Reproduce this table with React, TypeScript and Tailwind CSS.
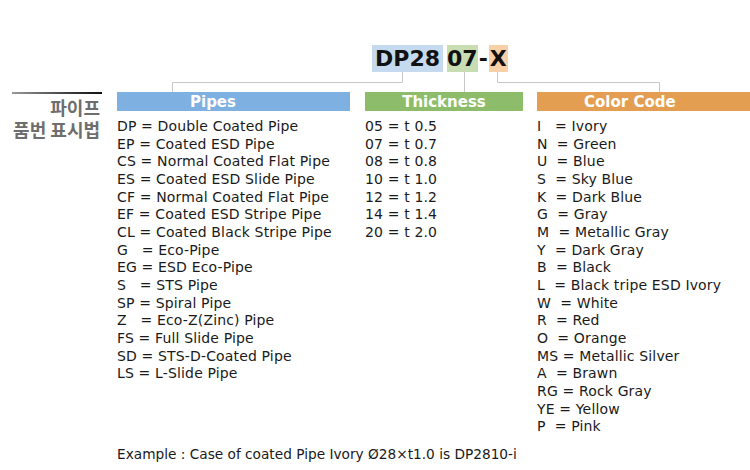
const pipes = [
  'DP = Double Coated Pipe',
  'EP = Coated ESD Pipe',
  'CS = Normal Coated Flat Pipe',
  'ES = Coated ESD Slide Pipe',
  'CF = Normal Coated Flat Pipe',
  'EF = Coated ESD Stripe Pipe',
  'CL = Coated Black Stripe Pipe',
  'G   = Eco-Pipe',
  'EG = ESD Eco-Pipe',
  'S   = STS Pipe',
  'SP = Spiral Pipe',
  'Z   = Eco-Z(Zinc) Pipe',
  'FS = Full Slide Pipe',
  'SD = STS-D-Coated Pipe',
  'LS = L-Slide Pipe',
];

const thickness = [
  '05 = t 0.5',
  '07 = t 0.7',
  '08 = t 0.8',
  '10 = t 1.0',
  '12 = t 1.2',
  '14 = t 1.4',
  '20 = t 2.0',
];

const colors = [
  'I   = Ivory',
  'N  = Green',
  'U  = Blue',
  'S  = Sky Blue',
  'K  = Dark Blue',
  'G  = Gray',
  'M  = Metallic Gray',
  'Y  = Dark Gray',
  'B  = Black',
  'L  = Black tripe ESD Ivory',
  'W  = White',
  'R  = Red',
  'O  = Orange',
  'MS = Metallic Silver',
  'A  = Brawn',
  'RG = Rock Gray',
  'YE = Yellow',
  'P  = Pink',
];

function Column({ title, items, bar, titleClass }: { title: string; items: string[]; bar: string; titleClass: string }) {
  return (
    <div className="flex flex-col">
      <div className={`h-[19px] flex items-center ${bar} ${titleClass}`}>
        <span className="text-white font-bold text-[15px] leading-none pt-[1px]">{title}</span>
      </div>
      <ul className="mt-[7px] text-[14px] tracking-[0.15px] leading-[17.65px] text-[#1a1a1a] whitespace-pre">
        {items.map((line) => (
          <li key={line}>{line}</li>
        ))}
      </ul>
    </div>
  );
}

export default function App() {
  return (
    <div className="w-[750px] h-[470px] bg-white overflow-hidden pt-[45px] font-['DejaVu_Sans',sans-serif]">
      {/* part number */}
      <div className="ml-[372px] flex items-center h-[27px] text-[22px] font-bold text-[#111] leading-none">
        <span className="bg-[#c6daef] h-[27px] px-[3px] flex items-center">DP28</span>
        <span className="bg-[#c8ddb2] h-[27px] ml-[4px] flex items-center">07</span>
        <span className="mx-[1px]">-</span>
        <span className="bg-[#f8d0a8] h-[27px] px-[1px] flex items-center">X</span>
      </div>

      {/* connectors */}
      <svg width="750" height="20" className="block">
        <g stroke="#c8c8c8" strokeWidth="1" fill="none">
          <polyline points="402.5,0 402.5,10.5 172.5,10.5 172.5,20" />
          <line x1="464.5" y1="0" x2="464.5" y2="20" />
          <polyline points="497.5,0 497.5,10.5 659.5,10.5 659.5,20" />
        </g>
      </svg>

      <div className="flex items-start">
        <div className="w-[117px] flex flex-col items-end">
          <div className="w-[90px] h-[2px] mr-[15px] bg-gradient-to-r from-[#9a9a9a] to-[#111]" />
          <div className="pr-[17px] mt-[3px] text-right text-[18px] font-bold text-[#6e6e6e] font-['Noto_Sans_CJK_KR',sans-serif]">
            <div className="leading-[21px]">파이프</div>
            <div className="leading-[21px] mt-[1px]">품번 표시법</div>
          </div>
        </div>
        <div className="w-[233px]">
          <Column title="Pipes" items={pipes} bar="bg-[#7eb0e1]" titleClass="pl-[73px]" />
        </div>
        <div className="w-[158px] ml-[15px]">
          <Column title="Thickness" items={thickness} bar="bg-[#8dbd6b]" titleClass="justify-center" />
        </div>
        <div className="w-[213px] ml-[14px]">
          <Column title="Color Code" items={colors} bar="bg-[#e39e52]" titleClass="pl-[47px]" />
        </div>
      </div>

      <p className="ml-[117px] mt-[10px] text-[13.7px] leading-[17.65px] text-[#1a1a1a]">
        Example : Case of coated Pipe Ivory Ø28×t1.0 is DP2810-i
      </p>
    </div>
  );
}
